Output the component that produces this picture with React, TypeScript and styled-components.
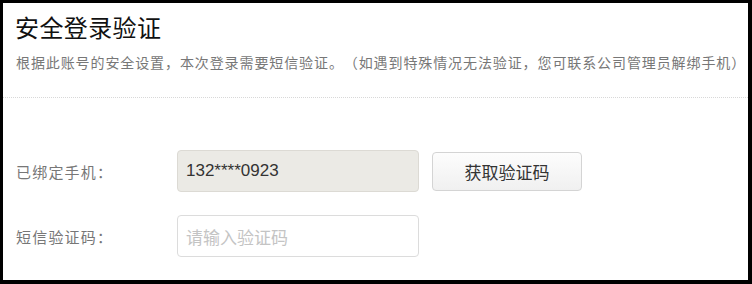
import React from "react";
import styled, { createGlobalStyle } from "styled-components";

const GlobalStyle = createGlobalStyle`
  html, body {
    margin: 0;
    padding: 0;
    background: #000;
  }
  body {
    font-family: "Noto Sans CJK SC", "Liberation Sans", sans-serif;
  }
`;

const Frame = styled.div`
  margin: 3px 4px 0 3px;
  height: 277px;
  background: #fff;
  display: flex;
  flex-direction: column;
  overflow: hidden;
`;

const Header = styled.header`
  padding: 6px 0 0 12px;
  display: flex;
  flex-direction: column;
`;

const Title = styled.h1`
  margin: 0;
  font-size: 24px;
  line-height: 36px;
  font-weight: 400;
  letter-spacing: 0.4px;
  color: #111;
  font-family: "Noto Sans CJK SC", sans-serif;
`;

const Subtitle = styled.p`
  margin: 7px 0 0 1px;
  font-size: 14px;
  line-height: 20px;
  letter-spacing: 0.9px;
  text-spacing-trim: space-all;
  color: #777;
  white-space: nowrap;
  font-family: "Noto Sans CJK SC", sans-serif;
`;

const Divider = styled.hr`
  margin: 25px 0 0 0;
  border: 0;
  border-top: 1px dotted #d8d8d8;
  height: 0;
`;

const Form = styled.form`
  padding: 52px 0 0 13px;
  display: flex;
  flex-direction: column;
  gap: 23px;
`;

const Row = styled.div`
  display: flex;
  align-items: center;
`;

const Label = styled.label`
  width: 161px;
  font-size: 15px;
  letter-spacing: 1.2px;
  text-spacing-trim: space-all;
  color: #777;
  font-family: "Noto Sans CJK SC", sans-serif;
`;

const Field = styled.input<{ $readonly?: boolean }>`
  box-sizing: border-box;
  width: 242px;
  height: 42px;
  padding: 0 8px;
  border: 1px solid ${(p) => (p.$readonly ? "#dcdad4" : "#dcdcdc")};
  border-radius: 4px;
  background: ${(p) => (p.$readonly ? "#ebeae5" : "#fff")};
  font-size: 17px;
  color: #333;
  font-family: ${(p) =>
    p.$readonly ? '"Liberation Sans", Arial, sans-serif' : '"Noto Sans CJK SC", sans-serif'};
  outline: none;
  &::placeholder {
    color: #c4c4c4;
  }
`;

const Button = styled.button`
  box-sizing: border-box;
  margin-left: 13px;
  width: 150px;
  height: 39px;
  border: 1px solid #d4d4d4;
  border-radius: 4px;
  background: linear-gradient(#fdfdfd, #f0f0f0);
  font-size: 17px;
  color: #333;
  font-family: "Noto Sans CJK SC", sans-serif;
  cursor: pointer;
`;

export default function App() {
  return (
    <>
      <GlobalStyle />
      <Frame>
        <Header>
          <Title>安全登录验证</Title>
          <Subtitle>
            根据此账号的安全设置，本次登录需要短信验证。（如遇到特殊情况无法验证，您可联系公司管理员解绑手机）
          </Subtitle>
        </Header>
        <Divider />
        <Form onSubmit={(e) => e.preventDefault()}>
          <Row>
            <Label>已绑定手机：</Label>
            <Field $readonly readOnly value="132****0923" />
            <Button type="button">获取验证码</Button>
          </Row>
          <Row>
            <Label>短信验证码：</Label>
            <Field placeholder="请输入验证码" />
          </Row>
        </Form>
      </Frame>
    </>
  );
}
